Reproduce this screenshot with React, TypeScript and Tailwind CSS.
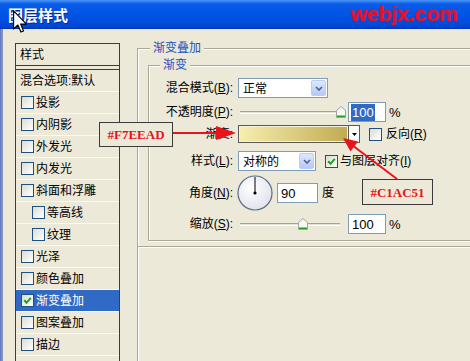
const items: { label: string; indent?: boolean; checked?: boolean }[] = [
  { label: "投影" },
  { label: "内阴影" },
  { label: "外发光" },
  { label: "内发光" },
  { label: "斜面和浮雕" },
  { label: "等高线", indent: true },
  { label: "纹理", indent: true },
  { label: "光泽" },
  { label: "颜色叠加" },
  { label: "渐变叠加", checked: true },
  { label: "图案叠加" },
  { label: "描边" },
];

function Check({ checked }: { checked?: boolean }) {
  return (
    <span className="flex h-[13px] w-[13px] shrink-0 items-center justify-center border border-[#1c5180] bg-gradient-to-br from-[#dcdcd4] to-white">
      {checked && (
        <svg width="9" height="9" viewBox="0 0 9 9">
          <path d="M1.2 4.2 L3.6 6.8 L7.8 1.8" stroke="#21a121" strokeWidth="2" fill="none" />
        </svg>
      )}
    </span>
  );
}

function Select({ value, width }: { value: string; width: string }) {
  return (
    <div className={`flex h-[20px] items-center border border-[#7f9db9] bg-white ${width}`}>
      <span className="flex-1 pl-[4px] pt-px">{value}</span>
      <span className="m-px flex h-[16px] w-[15px] items-center justify-center rounded-[2px] border border-[#b9cdf6] bg-gradient-to-b from-[#dde8fe] to-[#b4c9f5]">
        <svg width="8" height="5" viewBox="0 0 8 5">
          <path d="M1 1 L4 4 L7 1" stroke="#4d6185" strokeWidth="1.6" fill="none" />
        </svg>
      </span>
    </div>
  );
}

function Thumb() {
  return (
    <svg width="10" height="12" viewBox="0 0 10 12">
      <path d="M0.5 4.5 L5 0.5 L9.5 4.5 V11.5 H0.5 Z" fill="#f7f7f4" stroke="#9aa79a" />
      <path d="M1 9.5 H9 V11 H1 Z" fill="#21a121" />
    </svg>
  );
}

function Slider({ thumbLeft }: { thumbLeft: string }) {
  return (
    <div className="relative ml-[7px] h-[20px] w-[105px]">
      <div className="absolute left-0 right-[5px] top-[9px] h-[3px] border-t border-b border-t-[#a3a39a] border-b-white bg-[#e4e3da]" />
      <div className={`absolute top-[4px] ${thumbLeft}`}>
        <Thumb />
      </div>
    </div>
  );
}

function Label({ children }: { children: React.ReactNode }) {
  return <span className="w-[84px] shrink-0 text-right">{children}</span>;
}

export default function App() {
  return (
    <div className="relative h-[361px] w-[470px] overflow-hidden bg-[#ece9d8] font-['Liberation_Sans','Noto_Sans_CJK_SC',sans-serif] text-[12px] leading-none text-black">
      {/* title bar */}
      <div className="flex h-[29px] items-center justify-between border-b border-[#0037b8] bg-[linear-gradient(to_bottom,#4a96fa_0%,#0a5ce8_14%,#0055e5_50%,#004ada_88%,#003fc6_100%)] pl-[8px] pr-[12px]">
        <span className="font-['Noto_Sans_CJK_SC',sans-serif] text-[15px] font-bold text-white [text-shadow:1px_1px_#0b2a86]">
          图层样式
        </span>
        <span className="pb-[2px] font-['Liberation_Sans',sans-serif] text-[21px] font-bold text-[#e4122a] [text-shadow:0_0_1px_#e4122a]">
          webjx.com
        </span>
      </div>

      <div className="flex h-[332px]">
        <div className="w-[3px] bg-gradient-to-r from-[#5f79bd] to-[#8d9dcc]" />

        {/* style list */}
        <div className="ml-[12px] mt-[14px] flex w-[105px] flex-col border-x border-t border-[#3c3c3c]">
          <div className="flex h-[22px] items-center border-b border-[#3c3c3c] pl-[4px]">样式</div>
          <div className="h-[4px] border-b border-[#3c3c3c]" />
          <div className="flex h-[22px] items-center border-b border-[#faf9f4] pl-[4px]">混合选项:默认</div>
          {items.map((item) => (
            <div
              key={item.label}
              className={`flex h-[22px] items-center gap-[2px] border-b border-[#faf9f4] ${
                item.checked ? "bg-[#316ac5] text-white" : ""
              } ${item.indent ? "pl-[16px]" : "pl-[5px]"}`}
            >
              <Check checked={item.checked} />
              <span>{item.label}</span>
            </div>
          ))}
        </div>

        {/* right panel */}
        <div className="ml-[17px] flex flex-1 flex-col pt-[19px]">
          <div className="border-y border-l border-[#aca899] pb-[5px] shadow-[inset_1px_1px_0_#fff,0_1px_0_#fff]">
            <div className="-mt-[9px] ml-[12px] flex h-[16px] w-fit items-center bg-[#ece9d8] px-[3px] text-[#1f4fc0]">
              渐变叠加
            </div>
            <div className="ml-[10px] mt-[9px] border-y border-l border-[#aca899] pb-[6px] shadow-[inset_1px_1px_0_#fff,0_1px_0_#fff]">
              <div className="-mt-[9px] ml-[11px] flex h-[16px] w-fit items-center bg-[#ece9d8] px-[3px] text-[#1f4fc0]">
                渐变
              </div>

              <div className="mt-[5px] flex h-[20px] items-center">
                <Label>
                  混合模式(<u>B</u>):
                </Label>
                <div className="ml-[5px]">
                  <Select value="正常" width="w-[90px]" />
                </div>
              </div>

              <div className="mt-[4px] flex h-[20px] items-center">
                <Label>
                  不透明度(<u>P</u>):
                </Label>
                <Slider thumbLeft="left-[96px]" />
                <div className="ml-[3px] flex h-[20px] w-[38px] items-center border border-[#7f9db9] bg-white pl-[2px] text-[13px]">
                  <span className="bg-[#316ac5] px-px py-[2px] text-white">100</span>
                </div>
                <span className="ml-[3px] text-[13px]">%</span>
              </div>

              <div className="mt-[3px] flex h-[18px] items-center">
                <Label>渐变:</Label>
                <div className="ml-[5px] flex h-[18px] border border-[#5a5a5a]">
                  <div className="w-[109px] border border-[#f4f1e0] bg-gradient-to-r from-[#F7EEAD] to-[#C1AC51]" />
                  <div className="flex w-[11px] items-center justify-center border-l border-[#5a5a5a] bg-white">
                    <svg width="5" height="3" viewBox="0 0 5 3">
                      <path d="M0 0 H5 L2.5 3 Z" fill="#000" />
                    </svg>
                  </div>
                </div>
                <div className="ml-[9px]">
                  <Check />
                </div>
                <span className="ml-[4px]">
                  反向(<u>R</u>)
                </span>
              </div>

              <div className="mt-[8px] flex h-[20px] items-center">
                <Label>
                  样式(<u>L</u>):
                </Label>
                <div className="ml-[5px]">
                  <Select value="对称的" width="w-[78px]" />
                </div>
                <div className="ml-[9px]">
                  <Check checked />
                </div>
                <span className="ml-[2px]">
                  与图层对齐(<u>I</u>)
                </span>
              </div>

              <div className="mt-[4px] flex h-[36px] items-center">
                <Label>
                  角度(<u>N</u>):
                </Label>
                <svg className="ml-[4px]" width="36" height="36" viewBox="0 0 36 36">
                  <defs>
                    <radialGradient id="dial" cx="40%" cy="35%" r="70%">
                      <stop offset="0" stopColor="#ffffff" />
                      <stop offset="1" stopColor="#dfe2ec" />
                    </radialGradient>
                  </defs>
                  <circle cx="18" cy="18" r="17" fill="url(#dial)" stroke="#5c6b8a" strokeWidth="1.2" />
                  <line x1="18" y1="18" x2="18" y2="2" stroke="#000" strokeWidth="1" />
                  <circle cx="18" cy="18" r="1.6" fill="#000" />
                </svg>
                <div className="ml-[4px] flex h-[20px] w-[41px] items-center border border-[#7f9db9] bg-white pl-[3px] text-[13px]">
                  90
                </div>
                <span className="ml-[4px]">度</span>
              </div>

              <div className="mt-[3px] flex h-[20px] items-center">
                <Label>
                  缩放(<u>S</u>):
                </Label>
                <Slider thumbLeft="left-[58px]" />
                <div className="ml-[3px] flex h-[20px] w-[38px] items-center border border-[#7f9db9] bg-white pl-[3px] text-[13px]">
                  100
                </div>
                <span className="ml-[3px] text-[13px]">%</span>
              </div>
            </div>
          </div>
          <div className="flex-1 border-l border-[#aca899] shadow-[inset_1px_0_0_#fff]" />
        </div>
      </div>

      {/* annotations */}
      <div className="absolute left-[99px] top-[122px] flex h-[25px] w-[74px] items-center justify-center border border-[#3a3a3a] bg-[#ece9d8] font-['Liberation_Serif',serif] text-[13px] font-bold text-[#e8141c]">
        #F7EEAD
      </div>
      <div className="absolute left-[362px] top-[179px] flex h-[26px] w-[71px] items-center justify-center border border-[#3a3a3a] bg-[#ece9d8] font-['Liberation_Serif',serif] text-[13px] font-bold text-[#e8141c]">
        #C1AC51
      </div>
      <svg className="pointer-events-none absolute left-0 top-0" width="470" height="361">
        <line x1="173" y1="133" x2="222" y2="133" stroke="#e8141c" strokeWidth="2" />
        <polygon points="216,126 236,133 216,140" fill="#e8141c" />
        <line x1="397" y1="179" x2="352" y2="145" stroke="#e8141c" strokeWidth="2" />
        <polygon points="343,138 358,141.5 350.5,151.5" fill="#e8141c" />
      </svg>

      {/* mouse cursor */}
      <svg className="pointer-events-none absolute left-[13px] top-[10px]" width="14" height="24" viewBox="0 0 12 20">
        <path
          d="M0.5 0.5 V16 L4.2 12.6 L6.8 18.6 L9 17.6 L6.5 11.8 H11.5 Z"
          fill="#fff"
          stroke="#000"
          strokeWidth="1"
          strokeLinejoin="round"
        />
      </svg>
    </div>
  );
}
